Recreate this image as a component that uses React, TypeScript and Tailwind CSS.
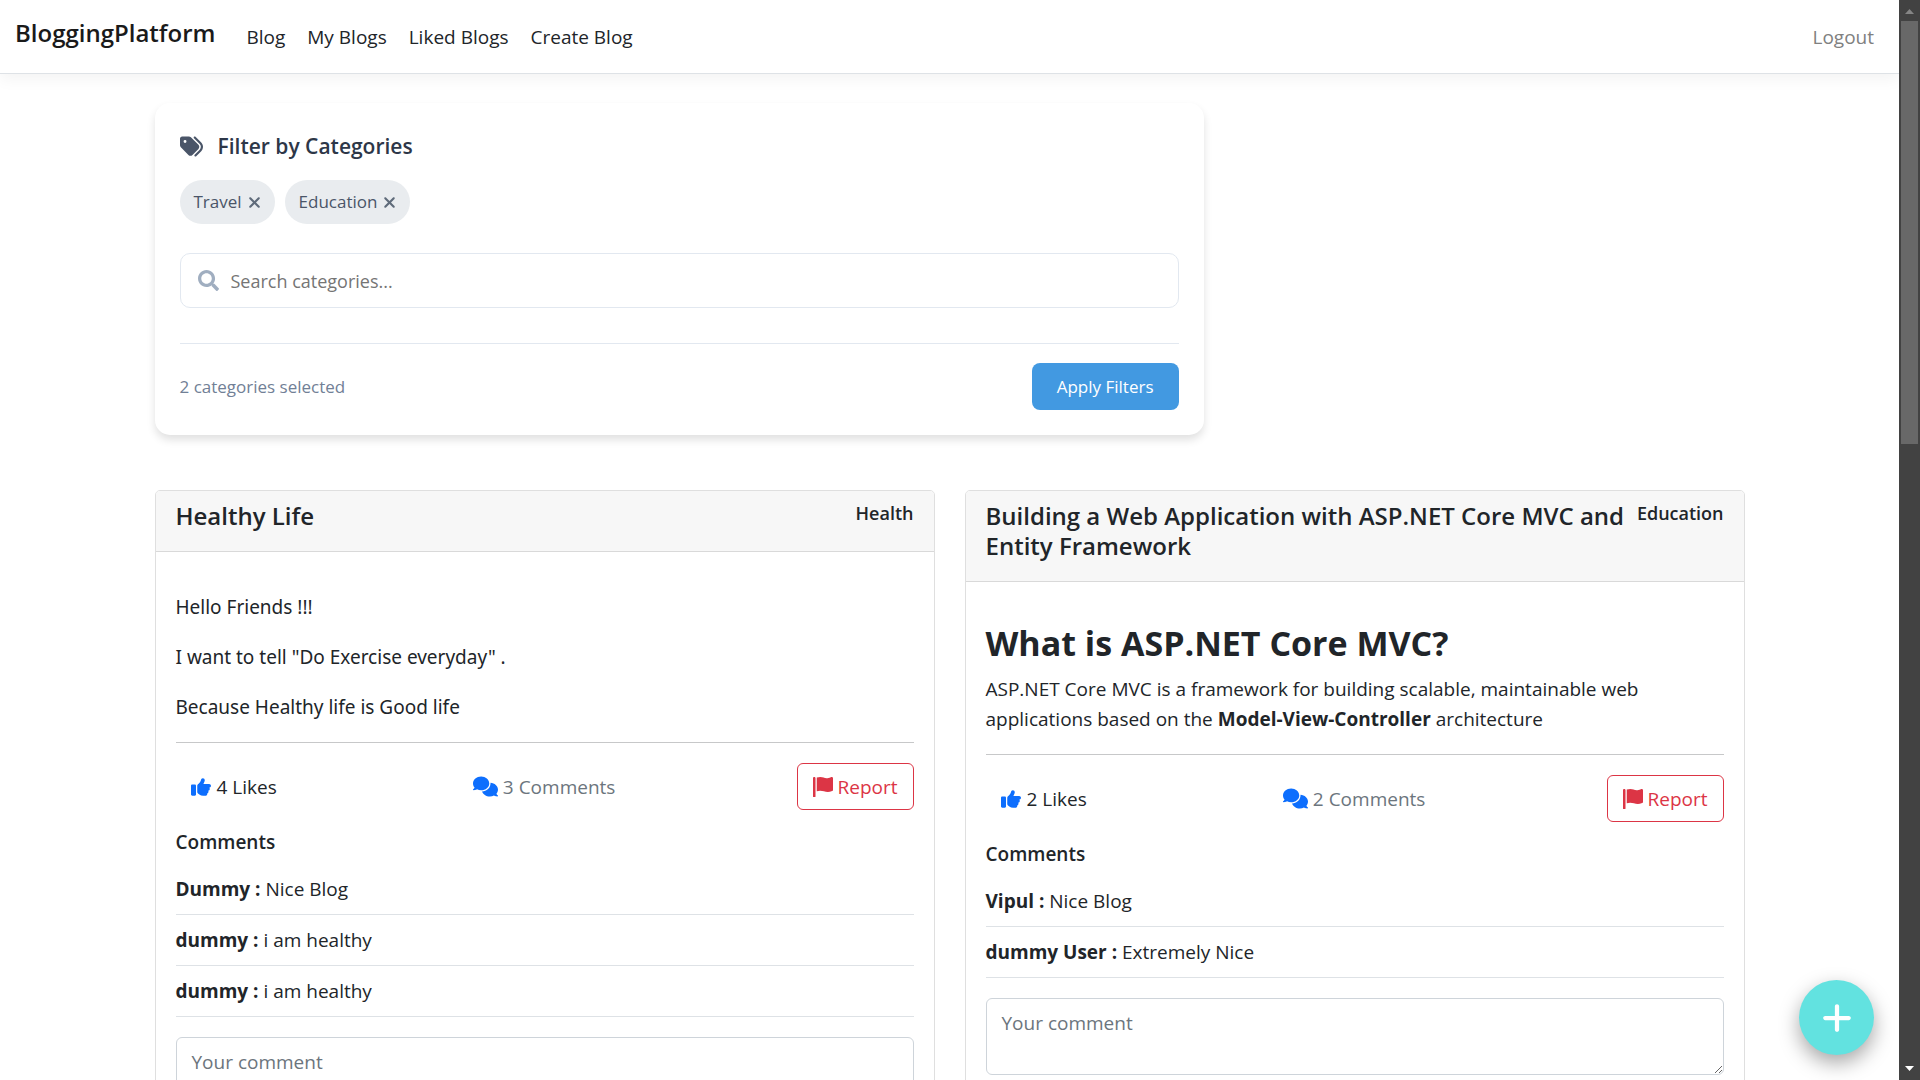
import type { ReactNode } from "react";
import { FaSearch } from "react-icons/fa";
import { FaComments, FaPlus, FaTags, FaXmark } from "react-icons/fa6";

type Comment = { author: string; text: string };

function ThumbsUpIcon() {
  return (
    <svg viewBox="0 0 512 512" className="size-5 fill-[#0d6efd]" aria-hidden="true">
      <path d="M128 447.1V223.1c0-17.67-14.33-31.1-32-31.1H32c-17.67 0-32 14.33-32 31.1v223.1c0 17.67 14.33 31.1 32 31.1h64C113.7 479.1 128 465.6 128 447.1zM512 224.1c0-26.5-21.48-47.98-47.98-47.98h-146.5c22.77-37.91 34.52-80.88 34.52-96.02C352 56.52 333.5 32 302.5 32c-63.13 0-26.36 76.15-108.2 141.6L178 186.6C166.2 196.1 160.2 210 160.1 224c-.0234 .0234 0 0 0 0L160 384c0 15.1 7.113 29.33 19.2 38.39l34.14 25.59C241 468.8 274.7 480 309.3 480H368c26.52 0 48-21.47 48-47.98c0-3.635-.4805-7.143-1.246-10.55C434 415.2 448 397.4 448 376c0-9.148-2.697-17.61-7.139-24.88C463.1 347 480 327.5 480 304.1c0-12.5-4.893-23.78-12.72-32.32C492.2 270.1 512 249.5 512 224.1z" />
    </svg>
  );
}

function FlagIcon() {
  return (
    <svg viewBox="0 0 512 512" className="size-5 fill-current" aria-hidden="true">
      <path d="M64 496C64 504.8 56.75 512 48 512h-32C7.25 512 0 504.8 0 496V32c0-17.75 14.25-32 32-32s32 14.25 32 32V496zM476.3 0c-6.365 0-13.01 1.35-19.34 4.233c-45.69 20.86-79.56 27.94-107.8 27.94c-59.96 0-94.81-31.86-163.9-31.87C160.9 .3055 131.6 4.867 96 15.75v350.5c32-9.984 59.87-14.1 84.85-14.1c73.63 0 124.9 31.78 198.6 31.78c31.91 0 68.02-5.971 111.1-23.09C504.1 355.9 512 344.4 512 332.1V30.73C512 11.1 495.3 0 476.3 0z" />
    </svg>
  );
}

function Navbar() {
  return (
    <header className="border-b border-[#dee2e6] bg-white shadow-[0_5px_15px_rgba(0,0,0,0.05)]">
      <nav className="flex h-[73px] items-center px-[15px]">
        <a href="#home" className="mr-5 -mt-2 text-[24px] leading-8 font-semibold text-[#1a1a1a]">BloggingPlatform</a>
        <ul className="flex flex-1">
          {["Blog", "My Blogs", "Liked Blogs", "Create Blog"].map((label) => (
            <li key={label}>
              <a href={"#" + label.toLowerCase().replace(" ", "-")} className="block px-[11px] text-[#212529]">{label}</a>
            </li>
          ))}
        </ul>
        <a href="#logout" className="px-[10px] text-[#808080]">Logout</a>
      </nav>
    </header>
  );
}

function Chip({ label }: { label: string }) {
  return (
    <span className="flex h-11 items-center gap-1 rounded-full bg-[#e9ecef] pr-3 pl-[14px] text-[17px] text-[#4a5568]">
      {label}
      <button type="button" aria-label={"Remove " + label} className="text-[17px] text-[#5f6b7a]">
        <FaXmark />
      </button>
    </span>
  );
}

function FilterPanel() {
  return (
    <section className="max-w-[1049px] rounded-[15px] bg-white p-[25px] shadow-[0_5px_8px_rgba(0,0,0,0.12)]">
      <h2 className="flex h-9 items-center gap-[15px] text-[21px] font-semibold text-[#2d3748]">
        <FaTags className="text-[23px] text-[#4a5568]" />
        Filter by Categories
      </h2>
      <div className="mt-4 flex gap-[10px]">
        <Chip label="Travel" />
        <Chip label="Education" />
      </div>
      <div className="mt-[29px] flex h-[55px] items-center gap-3 rounded-[10px] border border-[#e2e8f0] px-[17px]">
        <FaSearch className="text-[21px] text-[#a0aec0]" />
        <input
          type="text"
          aria-label="Search categories"
          placeholder="Search categories..."
          className="min-w-0 flex-1 text-[18px] outline-none placeholder:text-[#757575]"
        />
      </div>
      <div className="mt-[35px] flex items-center justify-between border-t border-[#e2e8f0] pt-[19px]">
        <p className="text-[17px] text-[#718096]">2 categories selected</p>
        <button type="button" className="h-[47px] rounded-lg bg-[#4299e1] px-[25px] text-[17px] text-white">Apply Filters</button>
      </div>
    </section>
  );
}

function BlogCard(props: { title: string; category: string; likes: number; comments: Comment[]; children: ReactNode }) {
  const { title, category, likes, comments, children } = props;
  return (
    <article className="rounded-[5px] border border-[#dfdfdf] bg-white">
      <header className="flex items-start justify-between rounded-t-[4px] border-b border-[#d9d9d9] bg-[#f7f7f7] px-5 py-[10px]">
        <h2 className="mb-[10px] text-[24px] leading-[30px] font-semibold">{title}</h2>
        <span className="ml-2 text-[18px] leading-6 font-semibold">{category}</span>
      </header>
      <div className="p-5">
        <div className="pt-5">{children}</div>
        <hr className="my-5 border-[#c7c8c9]" />
        <div className="flex items-center justify-between">
          <button type="button" className="flex h-[47px] items-center gap-[6px] px-[15px]">
            <ThumbsUpIcon />
            {likes} Likes
          </button>
          <span className="flex items-center gap-[5px] text-[#6c757d]">
            <FaComments className="text-[25px] text-[#0d6efd]" />
            {comments.length} Comments
          </span>
          <button type="button" className="flex h-[47px] items-center gap-[5px] rounded-[6px] border border-[#dc3545] px-[15px] text-[#dc3545]">
            <FlagIcon />
            Report
          </button>
        </div>
        <h3 className="mt-5 mb-5 text-[19px] leading-6 font-semibold">Comments</h3>
        <ul className="mb-5 flex flex-col gap-[10px]">
          {comments.map((c, i) => (
            <li key={i} className="border-b border-[#dee2e6] pb-[10px]">
              <strong>{c.author} :</strong> {c.text}
            </li>
          ))}
        </ul>
        <textarea
          aria-label="Your comment"
          placeholder="Your comment"
          rows={2}
          className="block h-[77px] w-full rounded-[6px] border border-[#ced4da] px-[15px] py-2 leading-8 placeholder:text-[#6c757d]"
        />
      </div>
    </article>
  );
}

function Scrollbar() {
  return (
    <aside aria-hidden="true" className="flex w-[21px] shrink-0 flex-col items-center bg-[#424242]">
      <svg viewBox="0 0 21 21" className="h-[21px] w-full shrink-0 fill-[#858585]"><path d="M6 14 10.500 9 15 14z" /></svg>
      <div className="h-[423px] w-[17px] bg-[#686868]" />
      <svg viewBox="0 0 21 21" className="mt-auto h-[21px] w-full shrink-0 fill-white"><path d="M6 7 15 7 10.500 12z" /></svg>
    </aside>
  );
}

export default function App() {
  return (
    <div className="flex h-screen overflow-hidden bg-white font-['Open_Sans',sans-serif] text-[19px] leading-[30px] text-[#212529]">
      <div className="relative min-w-0 flex-1 overflow-hidden">
        <Navbar />
        <main className="mx-auto max-w-[1590px] pt-[29px]">
          <FilterPanel />
          <div className="mt-[55px] grid grid-cols-2 items-start gap-[30px]">
            <BlogCard
              title="Healthy Life"
              category="Health"
              likes={4}
              comments={[
                { author: "Dummy", text: "Nice Blog" },
                { author: "dummy", text: "i am healthy" },
                { author: "dummy", text: "i am healthy" },
              ]}
            >
              <div className="flex flex-col gap-5 font-['Noto_Sans',sans-serif]">
                <p>Hello Friends !!!</p>
                <p>I want to tell "Do Exercise everyday" .</p>
                <p>Because Healthy life is Good life</p>
              </div>
            </BlogCard>
            <BlogCard
              title="Building a Web Application with ASP.NET Core MVC and Entity Framework"
              category="Education"
              likes={2}
              comments={[
                { author: "Vipul", text: "Nice Blog" },
                { author: "dummy User", text: "Extremely Nice" },
              ]}
            >
              <h1 className="mb-[10px] text-[34px] leading-[42px] font-bold">What is ASP.NET Core MVC?</h1>
              <p>
                ASP.NET Core MVC is a framework for building scalable, maintainable web applications based on the{" "}
                <strong>Model-View-Controller</strong> architecture
              </p>
            </BlogCard>
          </div>
        </main>
        <button
          type="button"
          aria-label="Create blog"
          className="absolute right-[25px] bottom-[25px] flex size-[75px] items-center justify-center rounded-full bg-[#62e2e0] text-[34px] text-white shadow-[0_8px_20px_rgba(0,0,0,0.35)]"
        >
          <FaPlus />
        </button>
      </div>
      <Scrollbar />
    </div>
  );
}
